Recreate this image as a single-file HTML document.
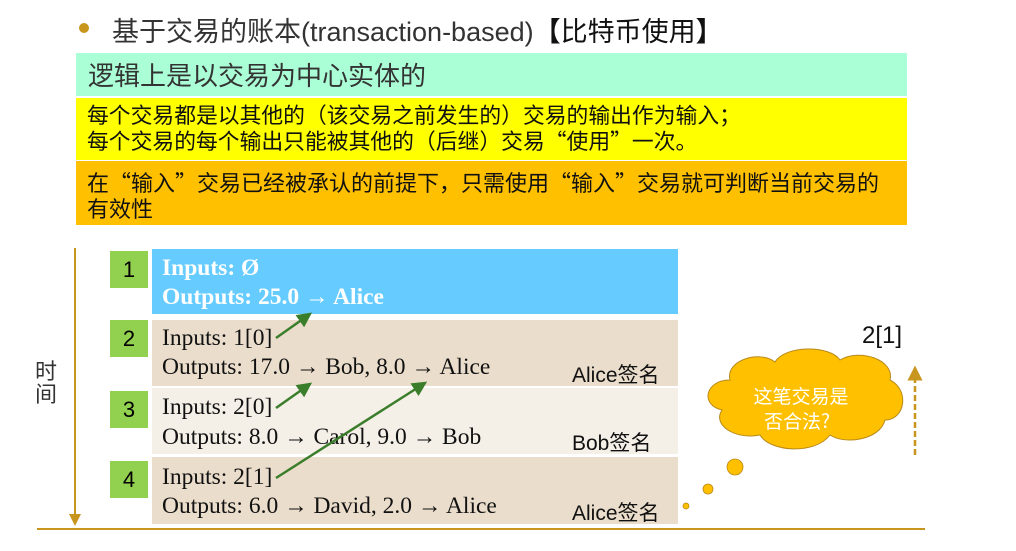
<!DOCTYPE html>
<html><head><meta charset="utf-8"><style>
body{margin:0;width:1016px;height:551px;background:#fff;position:relative;overflow:hidden;font-family:"Liberation Sans","Noto Sans CJK SC",sans-serif}
.a{position:absolute}
.cjk{font-family:"Noto Sans CJK SC","Liberation Sans",sans-serif}
.num{position:absolute;left:110px;width:38px;height:37px;background:#92d050;font-size:22px;line-height:37px;text-align:center;color:#000}
.row{position:absolute;left:152px;width:526px;font-family:"Liberation Serif","Noto Serif CJK SC",serif;font-size:23.5px;color:#111}
.row div{position:absolute;left:10px;white-space:nowrap}
.sig{position:absolute;left:572px;font-size:21px;color:#111;white-space:nowrap}
</style></head><body>
<div class="a" style="left:79px;top:23px;width:10px;height:10px;border-radius:50%;background:#c8961e"></div>
<div class="a" style="left:112px;top:10px;font-size:27px;color:#333;white-space:nowrap">基于交易的账本(transaction-based)<span class="cjk" style="color:#111;font-weight:bold">【</span><span style="color:#111">比特币使用</span><span class="cjk" style="color:#111;font-weight:bold">】</span></div>
<div class="a" style="left:76px;top:53px;width:831px;height:43px;background:#abffd6"></div>
<div class="a" style="left:88px;top:56px;font-size:26px;color:#333">逻辑上是以交易为中心实体的</div>
<div class="a" style="left:76px;top:98px;width:831px;height:62px;background:#ffff00"></div>
<div class="a cjk" style="left:87px;top:102px;font-size:21.8px;line-height:26px;color:#111;white-space:nowrap">每个交易都是以其他的（该交易之前发生的）交易的输出作为输入；<br>每个交易的每个输出只能被其他的（后继）交易“使用”一次。</div>
<div class="a" style="left:76px;top:161px;width:831px;height:64px;background:#ffc000"></div>
<div class="a cjk" style="left:87px;top:169px;font-size:22px;line-height:26px;color:#111;white-space:nowrap">在“输入”交易已经被承认的前提下，只需使用“输入”交易就可判断当前交易的<br>有效性</div>

<div class="a" style="left:35px;top:360px;font-size:22px;line-height:23px;color:#333;width:24px">时间</div>

<div class="num" style="top:251px">1</div>
<div class="num" style="top:320px">2</div>
<div class="num" style="top:391px">3</div>
<div class="num" style="top:461px">4</div>

<div class="row" style="top:249px;height:65px;background:#66ccff;color:#fff;font-weight:bold"><div style="top:6px">Inputs: Ø</div><div style="top:35px">Outputs: 25.0 → Alice</div></div>
<div class="row" style="top:320px;height:66px;background:#eaddcb"><div style="top:5px">Inputs: 1[0]</div><div style="top:34px">Outputs: 17.0 → Bob, 8.0 → Alice</div></div>
<div class="row" style="top:388px;height:66px;background:#f4efe7"><div style="top:6px">Inputs: 2[0]</div><div style="top:36px">Outputs: 8.0 → Carol, 9.0 → Bob</div></div>
<div class="row" style="top:457px;height:67px;background:#eaddcb"><div style="top:7px">Inputs: 2[1]</div><div style="top:36px">Outputs: 6.0 → David, 2.0 → Alice</div></div>
<div class="sig" style="top:359px">Alice签名</div>
<div class="sig" style="top:427px">Bob签名</div>
<div class="sig" style="top:497px">Alice签名</div>
<div class="a" style="left:862px;top:322px;font-size:24px;color:#111">2[1]</div>

<svg class="a" style="left:0;top:0" width="1016" height="551">
<defs><marker id="g" markerWidth="6" markerHeight="6" refX="5" refY="3" orient="auto"><path d="M0,0L6,3L0,6z" fill="#3a7d2a"/></marker>
<marker id="o" markerWidth="6" markerHeight="6" refX="5" refY="3" orient="auto"><path d="M0,0L6,3L0,6z" fill="#c8961e"/></marker></defs>
<line x1="75" y1="248" x2="75" y2="524" stroke="#c8961e" stroke-width="2" marker-end="url(#o)"/>
<line x1="37" y1="529" x2="925" y2="529" stroke="#c8961e" stroke-width="2"/>
<g stroke="#3a7d2a" stroke-width="2.5" fill="none">
<line x1="276" y1="338" x2="310" y2="314" marker-end="url(#g)"/>
<line x1="276" y1="408" x2="310" y2="384" marker-end="url(#g)"/>
<line x1="276" y1="478" x2="425" y2="383" marker-end="url(#g)"/>
</g>
<line x1="915" y1="455" x2="915" y2="368" stroke="#c8961e" stroke-width="2.5" stroke-dasharray="6,3" marker-end="url(#o)"/>
<path d="M730,380 C725,360 760,350 775,362 C785,345 830,345 840,360 C860,348 895,360 890,380 C910,390 905,420 885,420 C880,440 845,445 830,435 C815,455 770,452 760,435 C735,440 712,425 722,410 C700,405 705,380 730,380 Z" fill="#ffc000" stroke="#b8891a" stroke-width="1"/>
<circle cx="735" cy="467" r="8" fill="#ffc000" stroke="#b8891a" stroke-width="0.8"/>
<circle cx="708" cy="489" r="5" fill="#ffc000" stroke="#b8891a" stroke-width="0.8"/>
<circle cx="686" cy="506" r="3" fill="#ffc000" stroke="#b8891a" stroke-width="0.8"/>
<text x="801" y="403" text-anchor="middle" font-size="19" fill="#fff" font-family="Noto Sans CJK SC,sans-serif">这笔交易是</text>
<text x="797" y="428" text-anchor="middle" font-size="19" fill="#fff" font-family="Noto Sans CJK SC,sans-serif">否合法?</text>
</svg>
</body></html>
